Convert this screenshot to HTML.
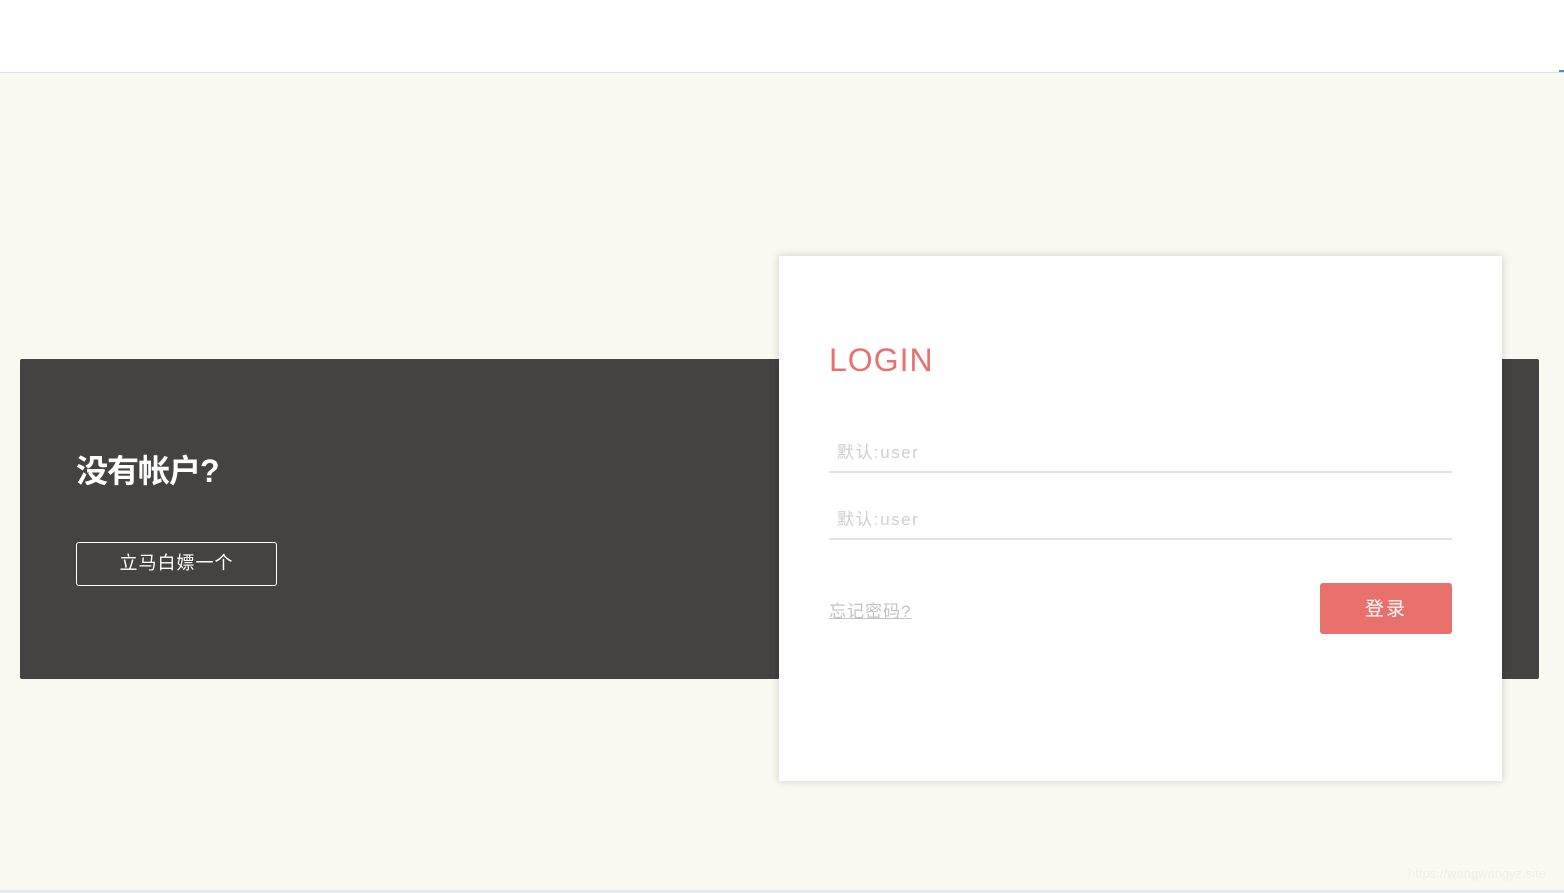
<!DOCTYPE html>
<html><head><meta charset="utf-8"><style>
body{margin:0;width:1564px;height:893px;position:relative;overflow:hidden;background:#f9f8f1;font-family:"Liberation Sans","Noto Sans CJK SC",sans-serif}
.top{position:absolute;left:0;top:0;width:1564px;height:72px;background:#fff;border-bottom:1px solid #dde1e6}
.blue{position:absolute;left:1559px;top:70px;width:5px;height:2px;background:#3d8fe8}
.dark{position:absolute;left:20px;top:359px;width:1519px;height:320px;background:#444341;border-radius:2px}
.h{position:absolute;left:76px;top:446px;color:#fff;font-size:32px;font-weight:bold;letter-spacing:-1px}
.btn{position:absolute;left:76px;top:542px;width:199px;height:42px;border:1px solid #fff;border-radius:3px;color:#fff;font-size:18px;text-align:center;line-height:40px;letter-spacing:1px}
.card{position:absolute;left:779px;top:256px;width:723px;height:525px;background:#fff;box-shadow:0 0 8px rgba(0,0,0,.18)}
.login{position:absolute;left:50px;top:86px;color:#e8716c;font-size:32px;letter-spacing:1px}
.in{position:absolute;left:50px;width:623px;height:40px;border-bottom:2px solid #e2e2e2;color:#cfcfcf;font-size:17px;letter-spacing:1.5px}
.in span{position:absolute;left:8px;top:7px}
.fg{position:absolute;left:50px;top:341px;color:#c2c2c2;font-size:17px;text-decoration:underline;letter-spacing:1px}
.sub{position:absolute;left:541px;top:327px;width:132px;height:51px;background:#e8716c;border-radius:3px;color:#fff;font-size:19px;text-align:center;line-height:53px;letter-spacing:2px}
.wm{position:absolute;left:1408px;top:866px;color:#efefe9;font-size:13px}
.bot{position:absolute;left:0;top:890px;width:1564px;height:3px;background:#e8eaee}
</style></head><body>
<div class="top"></div><div class="blue"></div>
<div class="dark"></div>
<div class="h">没有帐户?</div>
<div class="btn">立马白嫖一个</div>
<div class="card">
<div class="login">LOGIN</div>
<div class="in" style="top:175px"><span>默认:user</span></div>
<div class="in" style="top:242px"><span>默认:user</span></div>
<div class="fg">忘记密码?</div>
<div class="sub">登录</div>
</div>
<div class="wm">https://wangwangyz.site</div>
<div class="bot"></div>
</body></html>
